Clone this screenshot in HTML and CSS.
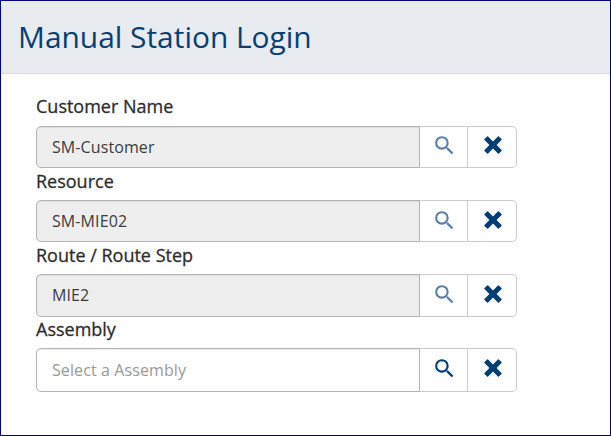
FILE: index.html
```html
<!DOCTYPE html>
<html lang="en">
<head>
<meta charset="utf-8">
<title>Manual Station Login</title>
<link rel="stylesheet" href="styles.css">
</head>
<body>
<svg class="defs" width="0" height="0" aria-hidden="true">
<symbol id="search" viewBox="0 0 24 24"><path d="M15.5 14h-.79l-.28-.27A6.47 6.47 0 0 0 16 9.5 6.5 6.5 0 1 0 9.500 16c1.610 0 3.090-.59 4.230-1.570l.27.28v.79l5 4.990L20.490 19l-4.990-5zm-6 0a4.500 4.500 0 1 1 0-9 4.500 4.500 0 0 1 0 9z"/></symbol>
<symbol id="clear" viewBox="0 0 18 18"><path d="M3.100.5Q3.600 0 4.100.5L9 5.400 13.900.5q.5-.5 1 0l2.600 2.600q.5.5 0 1L12.600 9l4.900 4.900q.5.500 0 1l-2.600 2.600q-.5.500-1 0L9 12.600l-4.900 4.900q-.5.500-1 0L.5 14.900q-.5-.5 0-1L5.400 9 .5 4.100q-.5-.5 0-1z"/></symbol>
</svg>
<main class="window">
<header class="header"><h1>Manual Station Login</h1></header>
<form class="form">
<div class="field first"><label>Customer Name</label><div class="group disabled"><div class="value">SM-Customer</div><button type="button" class="search"><svg><use href="#search"/></svg></button><button type="button" class="clear"><svg><use href="#clear"/></svg></button></div></div>
<div class="field"><label>Resource</label><div class="group disabled"><div class="value">SM-MIE02</div><button type="button" class="search"><svg><use href="#search"/></svg></button><button type="button" class="clear"><svg><use href="#clear"/></svg></button></div></div>
<div class="field"><label>Route / Route Step</label><div class="group disabled tall"><div class="value">MIE2</div><button type="button" class="search"><svg><use href="#search"/></svg></button><button type="button" class="clear"><svg><use href="#clear"/></svg></button></div></div>
<div class="field"><label>Assembly</label><div class="group tall editable"><div class="value placeholder">Select a Assembly</div><button type="button" class="search"><svg><use href="#search"/></svg></button><button type="button" class="clear"><svg><use href="#clear"/></svg></button></div></div>
</form>
</main>
</body>
</html>
```
FILE: styles.css
```css
* { box-sizing: border-box; }
body { margin: 0; font-family: "Open Sans", sans-serif; color: #3c3c3c; }
.defs { display: none; }
.window { width: 611px; height: 436px; border: 1px solid #000080; background: #fff; overflow: hidden; }
.header { height: 73px; padding-left: 17px; background: #e8ebf0; border-bottom: 1px solid #d9dde2; display: flex; align-items: center; }
h1 { margin: 0; font-size: 29.9px; font-weight: 400; line-height: 40px; color: #064072; }
.form { padding: 21px 0 0 35px; }
.field { height: 74px; }
label { display: block; height: 31px; font-size: 18px; font-weight: 400; line-height: 24px; color: #2c2c2c; -webkit-text-stroke: .28px #2c2c2c; }
.first label { line-height: 23px; }
.group { display: grid; grid-template-columns: 384px 48px 49px; width: 481px; height: 42px; }
.tall { height: 43px; }
.value { padding-left: 15px; border: 1px solid #b1b4b7; border-radius: 5px 0 0 5px; font-size: 16px; letter-spacing: .1px; line-height: 40px; box-shadow: inset 0 1px 1px rgba(0, 0, 0, .075); }
.disabled .value { background: #eee; }
.editable .value { line-height: 42px; }
.placeholder { color: #999; }
button { padding: 0 0 2px 2px; border: 1px solid #ccc; border-left: 0; background: #fff; display: flex; align-items: center; justify-content: center; }
.first button { padding-bottom: 4px; }
.tall button { padding-bottom: 3px; }
.editable button { padding-bottom: 4px; }
.search svg { width: 25px; height: 25px; fill: #003d73; }
.disabled .search svg { opacity: .65; }
.clear { border-radius: 0 5px 5px 0; }
.clear svg { width: 18px; height: 18px; fill: #003d73; }
```
